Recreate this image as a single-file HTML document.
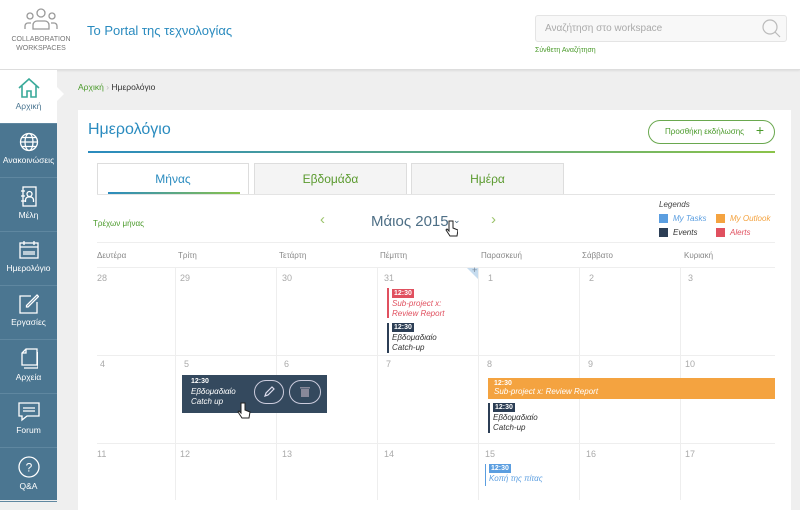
<!DOCTYPE html>
<html><head><meta charset="utf-8"><style>
*{box-sizing:border-box;margin:0;padding:0}
body{width:800px;height:500px;overflow:hidden;background:#efefef;font-family:"Liberation Sans","DejaVu Sans",sans-serif;position:relative}
.a{position:absolute}
.hdr{left:0;top:0;width:800px;height:70px;background:#fff;border-bottom:1px solid #ddd;box-shadow:0 1px 2px rgba(0,0,0,.08)}
.side{left:0;top:70px;width:57px;height:430px;background:#4b7691}
.si{position:absolute;left:0;width:57px;height:54px;border-bottom:1px solid #5f87a0;color:#fff;font-size:8.5px;text-align:center}
.si svg{display:block;margin:8px auto 3px}
.card{left:78px;top:110px;width:713px;height:400px;background:#fff}
.tab{top:163px;height:31px;background:#f4f4f4;border:1px solid #ddd;border-bottom:none;color:#5a9a2e;font-size:12px;text-align:center;line-height:31px}
.dn{top:251px;font-size:8px;color:#888}
.dt{font-size:9px;color:#aaa}
.vl{width:1px;background:#eee}
.hl{height:1px;background:#eee;left:97px;width:678px}
.badge{font-size:7px;line-height:9px;color:#fff;font-weight:bold;padding:0 2px;display:block;width:max-content}
.et{font-size:8px;font-style:italic;line-height:10px}
</style></head><body>
<div class="a hdr"></div>
<svg class="a" style="left:22px;top:7px" width="38" height="24" viewBox="0 0 38 24" fill="none" stroke="#999" stroke-width="1.3"><circle cx="19" cy="6" r="4"/><circle cx="8" cy="9" r="3"/><circle cx="30" cy="9" r="3"/><path d="M11 22v-4a4 4 0 0 1 4-4h8a4 4 0 0 1 4 4v4zM3 22v-3a3 3 0 0 1 3-3h3M35 22v-3a3 3 0 0 0-3-3h-3"/></svg>
<div class="a" style="left:8px;top:35px;width:66px;text-align:center;font-size:7px;color:#777;line-height:9px">COLLABORATION<br>WORKSPACES</div>
<div class="a" style="left:87px;top:23px;font-size:13px;color:#2a8bbf">Το Portal της τεχνολογίας</div>
<div class="a" style="left:535px;top:15px;width:252px;height:27px;border:1px solid #e4e4e4;border-radius:3px;background:#f8f8f8;font-size:10px;color:#aaa;padding:7px 9px">Αναζήτηση στο workspace</div>
<svg class="a" style="left:762px;top:19px" width="20" height="20" fill="none" stroke="#bbb" stroke-width="1.2"><circle cx="8" cy="8" r="7"/><path d="M13 13l5 5"/></svg>
<div class="a" style="left:535px;top:47px;font-size:7px;color:#4a9a2a">Σύνθετη Αναζήτηση</div>

<div class="a side">
<div class="si" style="top:0;background:#fff;color:#4b7691;height:54px"><svg width="22" height="20" fill="none" stroke="#3aaa9a" stroke-width="1.6" viewBox="0 0 22 20"><path d="M1 10L11 1l10 9M4 8v11h5v-6h4v6h5V8"/></svg>Αρχική</div>
<div class="a" style="left:57px;top:17px;width:0;height:0;border-top:7px solid transparent;border-bottom:7px solid transparent;border-left:7px solid #fff"></div>
<div class="si" style="top:54px"><svg width="20" height="20" fill="none" stroke="#fff" stroke-width="1.3"><circle cx="10" cy="10" r="8.5"/><ellipse cx="10" cy="10" rx="4" ry="8.5"/><path d="M1.5 10h17M3 5.5h14M3 14.5h14"/></svg>Ανακοινώσεις</div>
<div class="si" style="top:108px"><svg width="18" height="21" fill="none" stroke="#fff" stroke-width="1.3"><rect x="3" y="1" width="13" height="19"/><circle cx="9.5" cy="8" r="2.5"/><path d="M5.5 16v-2a3 3 0 0 1 3-3h2a3 3 0 0 1 3 3v2M1 5h4M1 10h4M1 15h4"/></svg>Μέλη</div>
<div class="si" style="top:162px"><svg width="20" height="20" fill="none" stroke="#fff" stroke-width="1.3"><rect x="1" y="3" width="18" height="15"/><path d="M1 7h18M5 1v4M15 1v4M4 12h12M4 14h12"/></svg>Ημερολόγιο</div>
<div class="si" style="top:216px"><svg width="20" height="20" fill="none" stroke="#fff" stroke-width="1.3"><path d="M12 2H1v17h17V8"/><path d="M18 1l1.5 1.5L9 13H7.5v-1.5z"/></svg>Εργασίες</div>
<div class="si" style="top:270px"><svg width="18" height="21" fill="none" stroke="#fff" stroke-width="1.3"><path d="M6 1h11v16H2V5z"/><path d="M2 5h4V1"/><path d="M4 20h14V4"/></svg>Αρχεία</div>
<div class="si" style="top:324px"><svg width="22" height="20" fill="none" stroke="#fff" stroke-width="1.3"><path d="M1 1h20v13H9l-5 4v-4H1z"/><path d="M5 6h12M5 9h12"/></svg>Forum</div>
<div class="si" style="top:378px"><svg width="22" height="22" fill="none" stroke="#fff" stroke-width="1.3"><circle cx="11" cy="11" r="10"/><text x="11" y="15.5" font-size="12" fill="#fff" stroke="none" text-anchor="middle" font-family="Liberation Sans">?</text></svg>Q&amp;A</div>
</div>

<div class="a" style="left:78px;top:82px;font-size:8.5px;color:#4a9a2a">Αρχική <span style="color:#bbb">›</span> <span style="color:#333">Ημερολόγιο</span></div>
<div class="a card"></div>
<div class="a" style="left:88px;top:121px;font-size:16px;color:#2a8bbf">Ημερολόγιο</div>
<div class="a" style="left:88px;top:151px;width:687px;height:2px;background:linear-gradient(90deg,#2a8bbf,#8bc34a)"></div>
<div class="a" style="left:648px;top:120px;width:127px;height:24px;border:1px solid #6aa84f;border-radius:12px;font-size:8px;color:#4a9a2a;padding:6px 0 0 16px">Προσθήκη εκδήλωσης <span style="font-size:14px;position:absolute;right:10px;top:1px">+</span></div>

<div class="a tab" style="left:97px;width:152px;background:#fff;color:#2a8bbf">Μήνας</div>
<div class="a" style="left:108px;top:192px;width:132px;height:2px;background:linear-gradient(90deg,#2a8bbf,#8bc34a)"></div>
<div class="a tab" style="left:254px;width:153px">Εβδομάδα</div>
<div class="a tab" style="left:411px;width:153px">Ημέρα</div>
<div class="a" style="left:97px;top:194px;width:678px;height:1px;background:#e4e4e4"></div>

<div class="a" style="left:93px;top:219px;font-size:8px;color:#4a9a2a">Τρέχων μήνας</div>
<div class="a" style="left:320px;top:211px;font-size:15px;color:#9bc36a">‹</div>
<div class="a" style="left:371px;top:213px;font-size:15px;color:#4e6f86">Μάιος 2015</div>
<div class="a" style="left:453px;top:215px;font-size:9px;color:#4e6f86">⌄</div>
<div class="a" style="left:491px;top:211px;font-size:15px;color:#9bc36a">›</div>
<div class="a" style="left:659px;top:200px;font-size:8px;font-style:italic;color:#444">Legends</div>
<div class="a" style="left:659px;top:214px;width:9px;height:9px;background:#5b9ee0"></div><div class="a" style="left:673px;top:214px;font-size:8px;font-style:italic;color:#5b9ee0">My Tasks</div>
<div class="a" style="left:716px;top:214px;width:9px;height:9px;background:#f4a340"></div><div class="a" style="left:730px;top:214px;font-size:8px;font-style:italic;color:#f4a340">My Outlook</div>
<div class="a" style="left:659px;top:228px;width:9px;height:9px;background:#2c3e55"></div><div class="a" style="left:673px;top:228px;font-size:8px;font-style:italic;color:#333">Events</div>
<div class="a" style="left:716px;top:228px;width:9px;height:9px;background:#e0505f"></div><div class="a" style="left:730px;top:228px;font-size:8px;font-style:italic;color:#e0505f">Alerts</div>

<div class="a hl" style="top:242px"></div>
<div class="a dn" style="left:97px">Δευτέρα</div><div class="a dn" style="left:178px">Τρίτη</div><div class="a dn" style="left:279px">Τετάρτη</div><div class="a dn" style="left:380px">Πέμπτη</div><div class="a dn" style="left:481px">Παρασκευή</div><div class="a dn" style="left:582px">Σάββατο</div><div class="a dn" style="left:684px">Κυριακή</div>
<div class="a hl" style="top:267px"></div><div class="a hl" style="top:355px"></div><div class="a hl" style="top:443px"></div>
<div class="a vl" style="left:175px;top:267px;height:233px"></div><div class="a vl" style="left:276px;top:267px;height:233px"></div><div class="a vl" style="left:377px;top:267px;height:233px"></div><div class="a vl" style="left:478px;top:267px;height:233px"></div><div class="a vl" style="left:579px;top:267px;height:233px"></div><div class="a vl" style="left:680px;top:267px;height:233px"></div>
<div class="a" style="left:467px;top:268px;width:0;height:0;border-top:11px solid #c6dcef;border-left:11px solid transparent"></div>
<div class="a" style="left:472px;top:265px;font-size:9px;color:#789">+</div>

<div class="a dt" style="left:97px;top:273px">28</div><div class="a dt" style="left:180px;top:273px">29</div><div class="a dt" style="left:282px;top:273px">30</div><div class="a dt" style="left:384px;top:273px">31</div><div class="a dt" style="left:488px;top:273px">1</div><div class="a dt" style="left:589px;top:273px">2</div><div class="a dt" style="left:688px;top:273px">3</div>
<div class="a dt" style="left:100px;top:359px">4</div><div class="a dt" style="left:184px;top:359px">5</div><div class="a dt" style="left:284px;top:359px">6</div><div class="a dt" style="left:386px;top:359px">7</div><div class="a dt" style="left:487px;top:359px">8</div><div class="a dt" style="left:588px;top:359px">9</div><div class="a dt" style="left:685px;top:359px">10</div>
<div class="a dt" style="left:97px;top:449px">11</div><div class="a dt" style="left:180px;top:449px">12</div><div class="a dt" style="left:282px;top:449px">13</div><div class="a dt" style="left:384px;top:449px">14</div><div class="a dt" style="left:485px;top:449px">15</div><div class="a dt" style="left:586px;top:449px">16</div><div class="a dt" style="left:685px;top:449px">17</div>

<div class="a" style="left:387px;top:288px;width:2px;height:30px;background:#e0505f"></div>
<div class="a" style="left:392px;top:289px"><span class="badge" style="background:#e0505f">12:30</span><div class="et" style="color:#e0505f;margin-top:1px">Sub-project x:<br>Review Report</div></div>
<div class="a" style="left:387px;top:323px;width:2px;height:30px;background:#2c3e55"></div>
<div class="a" style="left:392px;top:323px"><span class="badge" style="background:#2c3e55">12:30</span><div class="et" style="color:#333;margin-top:1px">Εβδομαδιαίο<br>Catch-up</div></div>

<div class="a" style="left:182px;top:375px;width:145px;height:38px;background:#34495e;color:#fff;padding:3px 9px">
<div style="font-size:7px;font-weight:bold">12:30</div><div class="et" style="margin-top:2px">Εβδομαδιαίο<br>Catch up</div></div>
<div class="a" style="left:254px;top:380px;width:30px;height:24px;border:1px solid #ccd;border-radius:12px"></div>
<svg class="a" style="left:262px;top:385px" width="14" height="14" fill="none" stroke="#dde" stroke-width="1.2"><path d="M3 11l1-3 6-6 2 2-6 6z"/></svg>
<div class="a" style="left:289px;top:380px;width:32px;height:24px;border:1px solid #ccd;border-radius:12px"></div>
<svg class="a" style="left:299px;top:386px" width="12" height="12" fill="#889" ><rect x="2" y="3" width="8" height="8"/><rect x="1" y="1" width="10" height="1.5"/></svg>
<svg class="a" style="left:237px;top:402px" width="14" height="18"><path d="M4 1v10l-2-2-1 1 4 6h7l1-6-5-2V1z" fill="#fff" stroke="#222" stroke-width="1"/></svg>

<div class="a" style="left:488px;top:378px;width:287px;height:21px;background:#f4a340;color:#fff;padding:2px 6px"><div style="font-size:7px;font-weight:bold">12:30</div><div class="et">Sub-project x: Review Report</div></div>
<div class="a" style="left:488px;top:403px;width:2px;height:30px;background:#2c3e55"></div>
<div class="a" style="left:493px;top:403px"><span class="badge" style="background:#2c3e55">12:30</span><div class="et" style="color:#333;margin-top:1px">Εβδομαδιαίο<br>Catch-up</div></div>
<div class="a" style="left:485px;top:464px;width:1px;height:22px;background:#5b9ee0"></div>
<div class="a" style="left:489px;top:464px"><span class="badge" style="background:#5b9ee0">12:30</span><div class="et" style="color:#5b9ee0;margin-top:1px">Κοπή της πίτας</div></div>
<svg class="a" style="left:445px;top:220px" width="13" height="17"><path d="M4 1v10l-2-2-1 1 4 6h7l1-6-5-2V1z" fill="#fff" stroke="#222" stroke-width="1"/></svg>
</body></html>
